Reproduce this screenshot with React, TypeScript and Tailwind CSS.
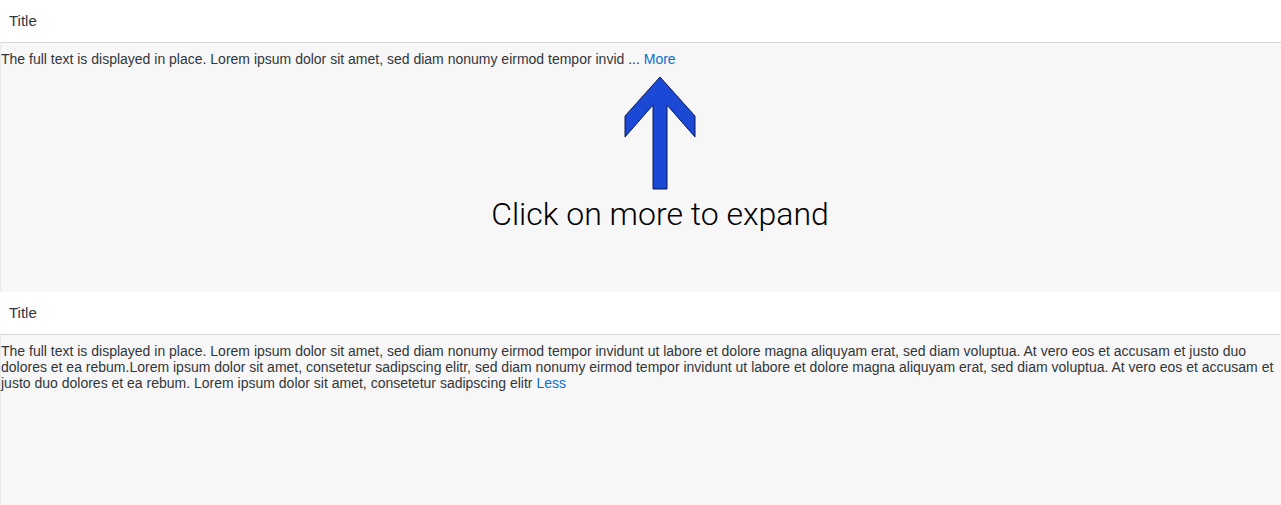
import React from "react";

const TEXT_COLOR = "text-[#32363a]";

function Header() {
  return (
    <div className="h-[43px] bg-white border-b border-[#d9d9d9] flex items-center pl-[9px]">
      <span className={`text-[15px] ${TEXT_COLOR}`}>Title</span>
    </div>
  );
}

export default function App() {
  const font = { fontFamily: '"Liberation Sans", Arial, sans-serif' };
  return (
    <div className="w-[1281px] h-[505px] overflow-hidden bg-[#f7f7f7]" style={font}>
      <section className="h-[292px] flex flex-col">
        <Header />
        <div className="flex-1 border-l border-[#ebebeb] pt-[8px]">
          <p className={`text-[14px] leading-[16px] ${TEXT_COLOR}`}>
            The full text is displayed in place. Lorem ipsum dolor sit amet, sed diam nonumy eirmod tempor invid ...{" "}
            <a className="text-[#0a6ed1] cursor-pointer">More</a>
          </p>
          <div className="w-[400px] ml-[459px] flex flex-col items-center mt-[9px]">
            <svg width="72" height="114" viewBox="623 76 72 114">
              <polygon
                points="659,77 694,116 694,137 666,105 666,189 652,189 652,105 624,137 624,116"
                fill="#1c48d6"
                stroke="#0b1b55"
                strokeWidth="1"
                strokeLinejoin="miter"
              />
            </svg>
            <div
              className="text-[32px] leading-[38px] font-light text-black mt-[5px] whitespace-nowrap"
              style={{ fontFamily: 'Roboto, "Liberation Sans", sans-serif' }}
            >
              Click on more to expand
            </div>
          </div>
        </div>
      </section>
      <section className="flex flex-col mr-px">
        <Header />
        <div className="border-l border-[#ebebeb] pt-[8px] h-[300px]">
          <p className={`text-[14px] leading-[16px] ${TEXT_COLOR}`}>
            The full text is displayed in place. Lorem ipsum dolor sit amet, sed diam nonumy eirmod tempor invidunt ut labore et dolore magna aliquyam erat, sed diam voluptua. At vero eos et accusam et justo duo dolores et ea rebum.Lorem ipsum dolor sit amet, consetetur sadipscing elitr, sed diam nonumy eirmod tempor invidunt ut labore et dolore magna aliquyam erat, sed diam voluptua. At vero eos et accusam et justo duo dolores et ea rebum. Lorem ipsum dolor sit amet, consetetur sadipscing elitr{" "}
            <a className="text-[#0a6ed1] cursor-pointer">Less</a>
          </p>
        </div>
      </section>
    </div>
  );
}
